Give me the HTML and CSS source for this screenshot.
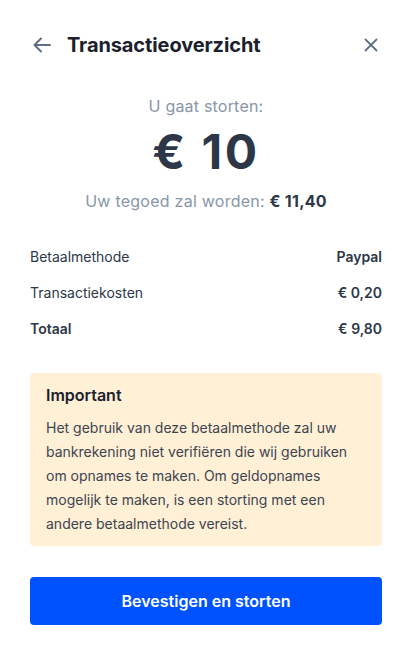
FILE: index.html
```html
<!DOCTYPE html>
<html lang="nl">
<head>
<meta charset="utf-8">
<link rel="stylesheet" href="styles.css">
</head>
<body>
<div class="sheet">
  <header class="header">
    <button class="icon-btn back" aria-label="Terug">
      <svg width="20" height="20" viewBox="0 0 20 20" fill="none" stroke="#5f6f82" stroke-width="2" stroke-linecap="round" stroke-linejoin="round"><path d="M18 10H2.5M9 3.5L2.5 10L9 16.5"/></svg>
    </button>
    <h1 class="title">Transactieoverzicht</h1>
    <button class="icon-btn close" aria-label="Sluiten">
      <svg width="14" height="14" viewBox="0 0 14 14" fill="none" stroke="#5f6f82" stroke-width="1.8" stroke-linecap="round"><path d="M1.5 1.5L12.5 12.5M12.5 1.5L1.5 12.5"/></svg>
    </button>
  </header>

  <section class="summary">
    <p class="label">U gaat storten:</p>
    <p class="amount">€ 10</p>
    <p class="balance">Uw tegoed zal worden: <strong>€ 11,40</strong></p>
  </section>

  <dl class="details">
    <div class="row"><dt>Betaalmethode</dt><dd>Paypal</dd></div>
    <div class="row"><dt>Transactiekosten</dt><dd>€ 0,20</dd></div>
    <div class="row total"><dt>Totaal</dt><dd>€ 9,80</dd></div>
  </dl>

  <div class="notice">
    <h2 class="notice-title">Important</h2>
    <p class="notice-text">Het gebruik van deze betaalmethode zal uw bankrekening niet verifiëren die wij gebruiken om opnames te maken. Om geldopnames mogelijk te maken, is een storting met een andere betaalmethode vereist.</p>
  </div>

  <button class="confirm">Bevestigen en storten</button>
</div>
</body>
</html>
```

FILE: styles.css
```css
* { box-sizing: border-box; }
html, body { margin: 0; padding: 0; background: #fff; }
body {
  font-family: Inter, "Noto Sans", sans-serif;
  color: #2d3748;
  -webkit-font-smoothing: antialiased;
}
.sheet {
  width: 412px;
  padding: 30px 30px 0;
}
.header {
  display: flex;
  align-items: center;
  height: 30px;
}
.icon-btn {
  border: 0;
  background: none;
  padding: 0;
  display: flex;
  align-items: center;
  justify-content: center;
  cursor: pointer;
}
.back { width: 22px; height: 22px; margin-left: 1px; }
.close { width: 14px; height: 14px; margin-left: auto; margin-right: 4px; }
.title {
  margin: 0 0 0 14px;
  font-size: 20px;
  font-weight: 700;
  color: #1a202c;
  letter-spacing: -0.1px;
}
.summary {
  text-align: center;
  margin-top: 36px;
}
.label {
  margin: 0;
  font-size: 16px;
  line-height: 20px;
  color: #8896a8;
  letter-spacing: 0.2px;
}
.amount {
  margin: 8px 0 0;
  font-size: 48px;
  line-height: 56px;
  font-weight: 700;
  color: #2d3748;
  letter-spacing: 2.5px;
}
.balance {
  margin: 11px 0 0;
  font-size: 16px;
  line-height: 20px;
  color: #8896a8;
  letter-spacing: 0.25px;
}
.balance strong { color: #2d3748; font-weight: 700; }
.details {
  margin: 37px 0 0;
  display: flex;
  flex-direction: column;
  gap: 18px;
}
.row {
  display: flex;
  justify-content: space-between;
  font-size: 14px;
  line-height: 18px;
}
.row dt { color: #2d3748; }
.row dd { margin: 0; font-weight: 600; color: #2d3748; }
.row.total dt { font-weight: 600; }
.notice {
  margin-top: 35px;
  background: #fff0d6;
  border-radius: 4px;
  padding: 12px 16px 10px;
}
.notice-title {
  margin: 0;
  font-size: 16px;
  line-height: 20px;
  font-weight: 600;
  color: #1a202c;
}
.notice-text {
  margin: 11px 0 0;
  font-size: 14px;
  line-height: 24px;
  color: #3d4451;
}
.confirm {
  display: block;
  width: 100%;
  height: 48px;
  margin-top: 31px;
  border: 0;
  border-radius: 4px;
  background: #0052ff;
  color: #fff;
  font-family: inherit;
  font-size: 16px;
  font-weight: 600;
  cursor: pointer;
}
```
